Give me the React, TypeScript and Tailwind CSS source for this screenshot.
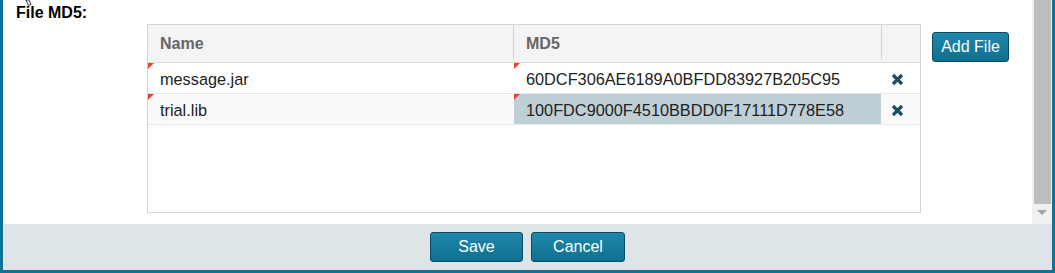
import React from "react";

const rows = [
  { name: "message.jar", md5: "60DCF306AE6189A0BFDD83927B205C95", selected: false },
  { name: "trial.lib", md5: "100FDC9000F4510BBDD0F17111D778E58", selected: true },
];

function Dirty() {
  return <span className="absolute left-0 top-0 w-0 h-0 border-t-[6px] border-r-[6px] border-t-[#e2462e] border-r-transparent" />;
}

function RemoveIcon() {
  return (
    <svg width="13" height="13" viewBox="0 0 13 13">
      <path d="M2 2 L11 11 M11 2 L2 11" stroke="#1d4e5e" strokeWidth="3.2" />
    </svg>
  );
}

function Btn({ label, w }: { label: string; w: string }) {
  return (
    <button className={`${w} h-[30px] rounded-[3px] border border-[#0b4c64] bg-gradient-to-b from-[#1f88aa] to-[#0f6f90] text-white text-[16px]`}>
      {label}
    </button>
  );
}

export default function App() {
  return (
    <div className="w-[1055px] h-[273px] flex flex-col border-l-[3px] border-r-[3px] border-b-[3px] border-[#0f7398] bg-white font-['Liberation_Sans',Arial,sans-serif] text-[16px] text-[#222]">
      <div className="flex h-[224px]">
        <div className="relative flex-1 overflow-hidden pt-[4px]">
          <svg className="absolute left-[19px] top-0" width="12" height="8" viewBox="0 0 12 8">
            <path d="M4 0 L6.5 5.5 L9 4.5 L7 0 Z" fill="white" stroke="black" strokeWidth="0.8" />
          </svg>
          <div className="pl-[13px] font-bold text-black leading-[18px]">File MD5:</div>
          <div className="flex items-start ml-[144px] mt-[2px] gap-[11px]">
            <div className="w-[774px] h-[189px] border border-[#d4d4d4]">
              <div className="flex h-[38px] bg-[#f4f4f4] border-b border-[#dcdcdc] font-bold text-[#666]">
                <div className="w-[366px] flex items-center pl-[12px] border-r border-[#d0d0d0] h-[34px] pt-[4px]">Name</div>
                <div className="w-[368px] flex items-center pl-[12px] border-r border-[#d0d0d0] h-[34px] pt-[4px]">MD5</div>
                <div className="flex-1" />
              </div>
              {rows.map((r, i) => (
                <div key={r.name} className={`flex h-[31px] border-b border-[#e6e6e6] text-[16.3px] ${i % 2 ? "bg-[#fafafa]" : "bg-white"}`}>
                  <div className="relative w-[366px] flex items-center pl-[12px] pt-[2px]">
                    <Dirty />
                    {r.name}
                  </div>
                  <div className={`relative w-[367px] flex items-center pl-[12px] pt-[2px] ${r.selected ? "bg-[#bfcfd6]" : ""}`}>
                    <Dirty />
                    {r.md5}
                  </div>
                  <div className="flex-1 flex items-center pl-[10px] pt-[2px]">
                    <RemoveIcon />
                  </div>
                </div>
              ))}
            </div>
            <div className="mt-[8px]">
              <Btn label="Add File" w="w-[77px]" />
            </div>
          </div>
        </div>
        <div className="w-[20px] bg-[#f0f0f0] flex flex-col items-center">
          <div className="w-[17px] h-[204px] bg-[#bdbdbd] ml-[1px]" />
          <div className="mt-[6px] w-0 h-0 border-l-[5px] border-r-[5px] border-t-[5px] border-l-transparent border-r-transparent border-t-[#a3a3a3]" />
        </div>
      </div>
      <div className="h-[46px] bg-[#dde5e6] flex items-center justify-center gap-[8px]">
        <Btn label="Save" w="w-[93px]" />
        <Btn label="Cancel" w="w-[94px]" />
      </div>
    </div>
  );
}
